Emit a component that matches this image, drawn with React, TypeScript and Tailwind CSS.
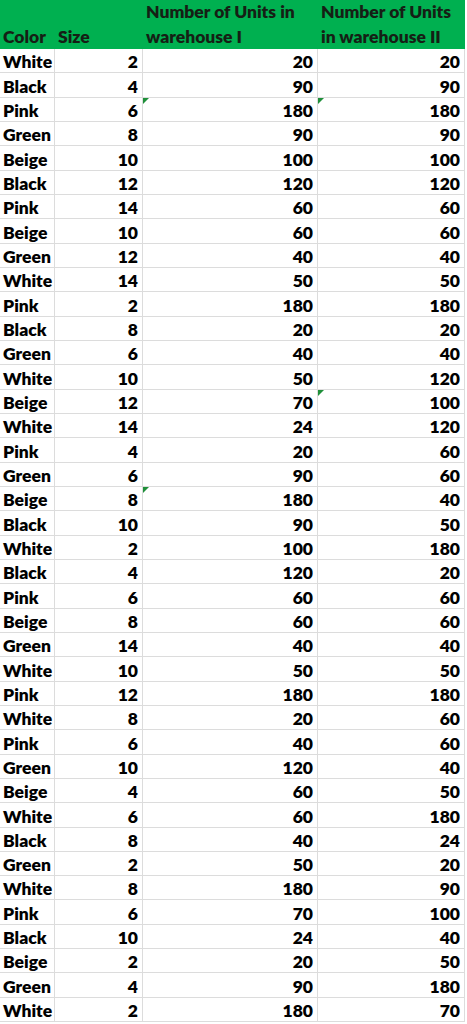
const rows: [string, number, number, number, string?][] = [
  ["White", 2, 20, 20],
  ["Black", 4, 90, 90],
  ["Pink", 6, 180, 180, "both"],
  ["Green", 8, 90, 90],
  ["Beige", 10, 100, 100],
  ["Black", 12, 120, 120],
  ["Pink", 14, 60, 60],
  ["Beige", 10, 60, 60],
  ["Green", 12, 40, 40],
  ["White", 14, 50, 50],
  ["Pink", 2, 180, 180],
  ["Black", 8, 20, 20],
  ["Green", 6, 40, 40],
  ["White", 10, 50, 120],
  ["Beige", 12, 70, 100, "w2"],
  ["White", 14, 24, 120],
  ["Pink", 4, 20, 60],
  ["Green", 6, 90, 60],
  ["Beige", 8, 180, 40, "w1"],
  ["Black", 10, 90, 50],
  ["White", 2, 100, 180],
  ["Black", 4, 120, 20],
  ["Pink", 6, 60, 60],
  ["Beige", 8, 60, 60],
  ["Green", 14, 40, 40],
  ["White", 10, 50, 50],
  ["Pink", 12, 180, 180],
  ["White", 8, 20, 60],
  ["Pink", 6, 40, 60],
  ["Green", 10, 120, 40],
  ["Beige", 4, 60, 50],
  ["White", 6, 60, 180],
  ["Black", 8, 40, 24],
  ["Green", 2, 50, 20],
  ["White", 8, 180, 90],
  ["Pink", 6, 70, 100],
  ["Black", 10, 24, 40],
  ["Beige", 2, 20, 50],
  ["Green", 4, 90, 180],
  ["White", 2, 180, 70],
];

function Flag() {
  // little green "number stored as text" marker in the cell corner
  return (
    <span className="absolute left-0 top-0 h-0 w-0 border-r-[6px] border-t-[6px] border-r-transparent border-t-[#1f8f3a]" />
  );
}

export default function App() {
  return (
    <div
      className="w-[467px] bg-white text-[17.5px] font-extrabold text-black"
      style={{ fontFamily: "Lato, 'Open Sans', sans-serif" }}
    >
      <div className="flex h-[49px] w-[465px] items-end bg-[#00b050] leading-[25px]">
        <div className="w-[55px] pl-[3px] text-[#151f15]">Color</div>
        <div className="w-[88px] pl-[3px] text-[#151f15]">Size</div>
        <div className="w-[175px] pl-[3px] text-[#151f15]">
          Number of Units in
          <br />
          warehouse I
        </div>
        <div className="w-[147px] pl-[3px] text-[#151f15]">
          Number of Units
          <br />
          in warehouse II
        </div>
      </div>

      {rows.map(([color, size, w1, w2, flag], i) => (
        <div
          key={i}
          className="flex h-[24.33px] w-[465px] items-end border-b border-[#dcdcdc] leading-[21px]"
        >
          <div className="h-full w-[55px] border-r border-[#dcdcdc] pl-[3px] flex items-end">{color}</div>
          <div className="h-full w-[88px] border-r border-[#dcdcdc] pr-[4px] flex items-end justify-end">{size}</div>
          <div className="relative h-full w-[175px] border-r border-[#dcdcdc] pr-[4px] flex items-end justify-end">
            {flag === "both" || flag === "w1" ? <Flag /> : null}
            {w1}
          </div>
          <div className="relative h-full w-[147px] border-r border-[#dcdcdc] pr-[4px] flex items-end justify-end">
            {flag === "both" || flag === "w2" ? <Flag /> : null}
            {w2}
          </div>
        </div>
      ))}
    </div>
  );
}
